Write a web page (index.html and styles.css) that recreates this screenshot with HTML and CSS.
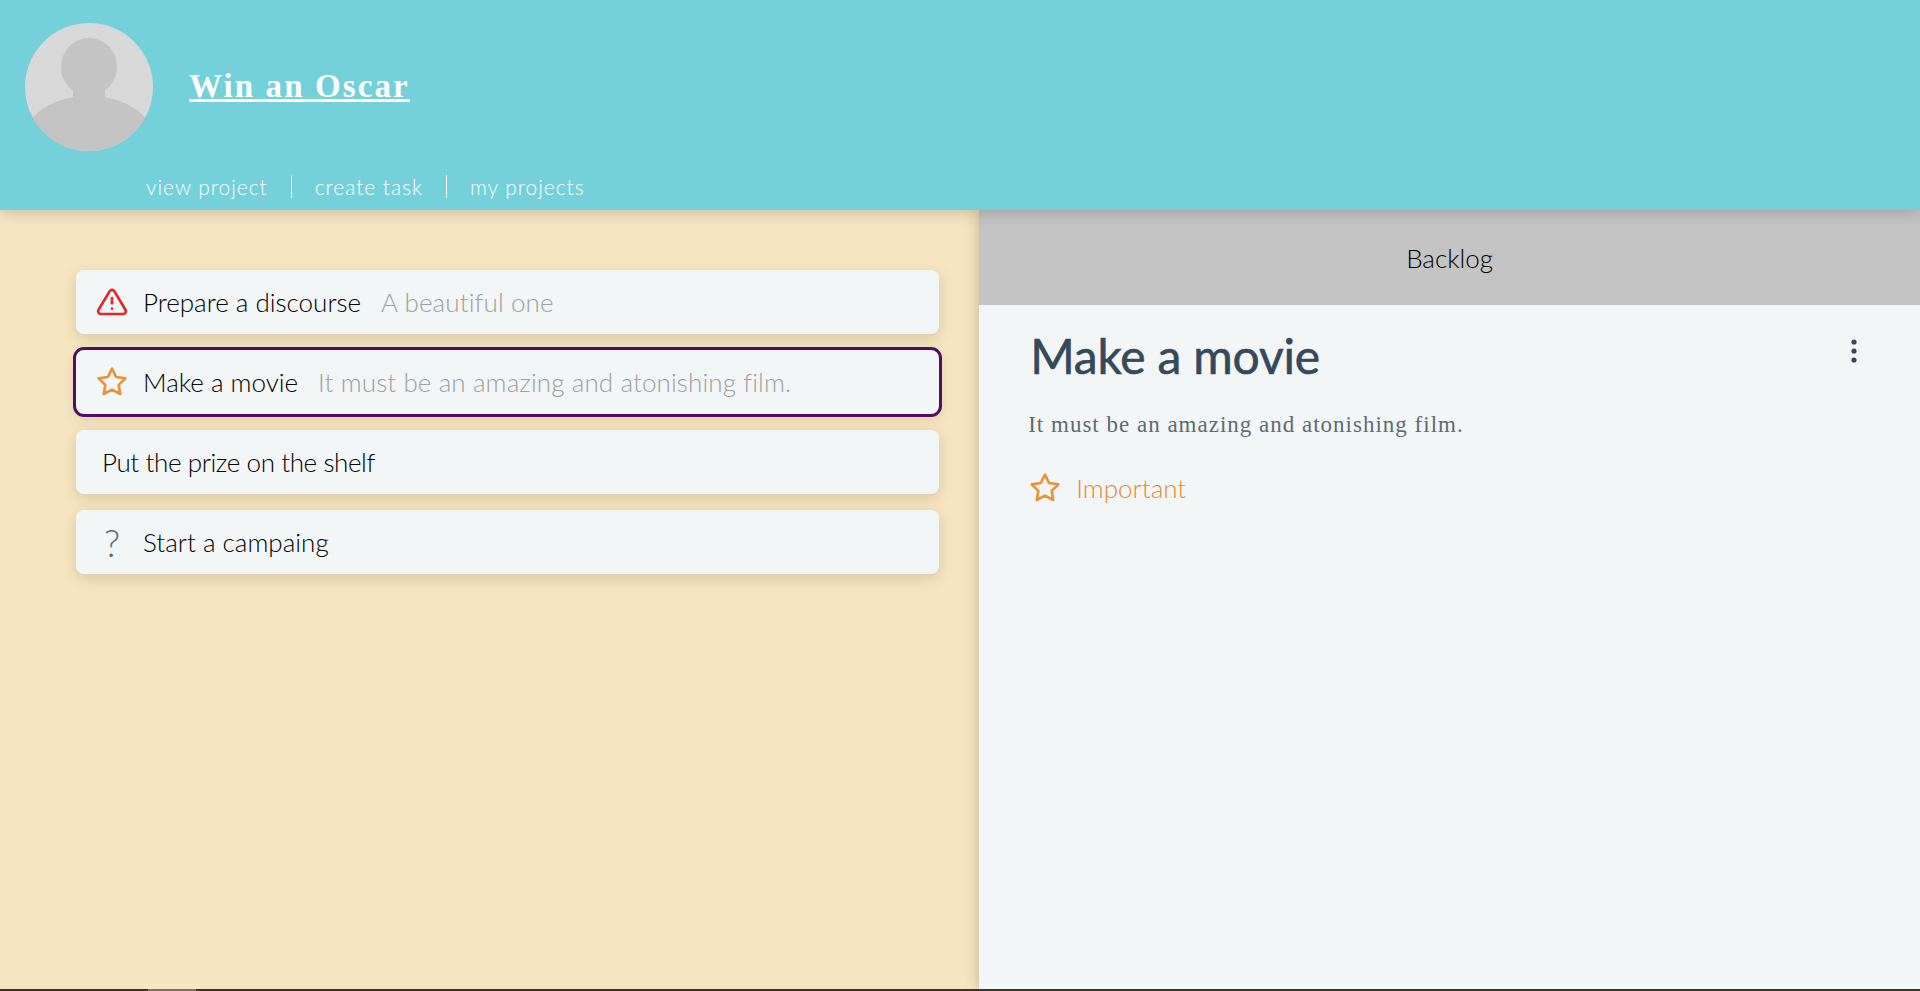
FILE: index.html
```html
<!DOCTYPE html>
<html lang="en">

<head>
    <meta charset="UTF-8">
    <meta name="viewport" content="width=device-width, initial-scale=1.0">
    <title>Win an Oscar</title>
    <link rel="stylesheet" href="styles.css">
</head>

<body>
    <!-- project header -->
    <header class="header">
        <div class="project">
            <svg class="avatar" viewBox="0 0 128 128">
                <defs>
                    <clipPath id="avatar-clip">
                        <circle cx="64" cy="64" r="64"></circle>
                    </clipPath>
                </defs>
                <circle cx="64" cy="64" r="64" fill="#d9d9d9"></circle>
                <g clip-path="url(#avatar-clip)" fill="#c4c4c4">
                    <ellipse cx="64" cy="44" rx="28" ry="29"></ellipse>
                    <rect x="48" y="56" width="32" height="24"></rect>
                    <path d="M48 74C28 78 14 86 5 98V128H123V98C114 86 100 78 80 74Z"></path>
                </g>
            </svg>
            <a class="project-title" href="#">Win an Oscar</a>
        </div>
        <nav class="nav">
            <a href="#">view project</a>
            <span class="nav-sep"></span>
            <a href="#">create task</a>
            <span class="nav-sep"></span>
            <a href="#">my projects</a>
        </nav>
    </header>

    <div class="main">
        <!-- task list -->
        <section class="tasks">
            <div class="task">
                <svg class="task-icon" viewBox="0 0 24 24" fill="none" stroke="#e5262b" stroke-width="2" stroke-linecap="round" stroke-linejoin="round">
                    <path d="M10.29 3.86L1.82 18a2 2 0 0 0 1.71 3h16.94a2 2 0 0 0 1.71-3L13.71 3.86a2 2 0 0 0-3.42 0z"></path>
                    <line x1="12" y1="9" x2="12" y2="13"></line>
                    <line x1="12" y1="17" x2="12.01" y2="17"></line>
                </svg>
                <span class="task-name">Prepare a discourse</span>
                <span class="task-desc">A beautiful one</span>
            </div>
            <div class="task selected">
                <svg class="task-icon" viewBox="0 0 24 24" fill="none" stroke="#e8933a" stroke-width="2" stroke-linejoin="round">
                    <polygon points="12 2 15.09 8.26 22 9.27 17 14.14 18.18 21.02 12 17.77 5.82 21.02 7 14.14 2 9.27 8.91 8.26"></polygon>
                </svg>
                <span class="task-name">Make a movie</span>
                <span class="task-desc">It must be an amazing and atonishing film.</span>
            </div>
            <div class="task plain">
                <span class="task-name">Put the prize on the shelf</span>
            </div>
            <div class="task">
                <span class="task-question">?</span>
                <span class="task-name">Start a campaing</span>
            </div>
        </section>

        <!-- task detail -->
        <section class="detail">
            <div class="status">Backlog</div>
            <div class="detail-body">
                <div class="detail-top">
                    <h1>Make a movie</h1>
                    <svg class="more" viewBox="0 0 6 24" fill="#3a4650">
                        <circle cx="3" cy="3" r="2.6"></circle>
                        <circle cx="3" cy="12" r="2.6"></circle>
                        <circle cx="3" cy="21" r="2.6"></circle>
                    </svg>
                </div>
                <p class="detail-desc">It must be an amazing and atonishing film.</p>
                <div class="priority">
                    <svg class="task-icon" viewBox="0 0 24 24" fill="none" stroke="#e8933a" stroke-width="2" stroke-linejoin="round">
                        <polygon points="12 2 15.09 8.26 22 9.27 17 14.14 18.18 21.02 12 17.77 5.82 21.02 7 14.14 2 9.27 8.91 8.26"></polygon>
                    </svg>
                    <span>Important</span>
                </div>
            </div>
        </section>
    </div>

    <!-- scrollbar line at the bottom of the window -->
    <div class="bottom-line">
        <div class="bottom-thumb"></div>
    </div>
</body>

</html>
```

FILE: styles.css
```css
/* page */
html,
body {
    height: 100%;
}

body {
    margin: 0;
    display: flex;
    flex-direction: column;
    overflow: hidden;
    font-family: Lato, "Noto Sans", sans-serif;
    font-weight: 300;
    color: #000;
    background-color: #f6e6c2;
}

/* header */
.header {
    position: relative;
    z-index: 2;
    height: 210px;
    flex: none;
    box-sizing: border-box;
    padding: 23px 0 0 25px;
    background-color: #74d1da;
    box-shadow: 0 2px 16px rgba(0, 0, 0, 0.2);
    color: white;
}

.project {
    display: flex;
    align-items: center;
    gap: 36px;
}

.avatar {
    width: 128px;
    height: 128px;
}

.project-title {
    margin-top: -2px;
    font-family: "Liberation Serif", serif;
    font-size: 33px;
    font-weight: 700;
    letter-spacing: 2.1px;
    color: white;
}

.nav {
    display: flex;
    align-items: center;
    gap: 23px;
    margin: 23px 0 0 121px;
    font-size: 21px;
    letter-spacing: 0.95px;
}

.nav a {
    color: white;
    text-decoration: none;
}

.nav-sep {
    width: 1px;
    height: 23px;
    background-color: white;
}

/* two columns */
.main {
    flex: 1;
    display: flex;
    min-height: 0;
}

.tasks {
    width: 51%;
    box-sizing: border-box;
    padding: 60px 40px 0 76px;
    display: flex;
    flex-direction: column;
    gap: 16px;
}

.task {
    height: 64px;
    display: flex;
    align-items: center;
    padding-left: 20px;
    background-color: #f3f6f7;
    border-radius: 8px;
    box-shadow: 0 4px 14px rgba(120, 90, 30, 0.22);
    font-size: 26px;
}

.task.selected {
    outline: 3px solid #4f0f66;
}

.task.plain {
    padding-left: 26px;
    letter-spacing: -0.4px;
}

.task-icon {
    width: 32px;
    height: 32px;
    flex: none;
    margin-right: 15px;
}

.task-question {
    width: 32px;
    margin-right: 15px;
    text-align: center;
    font-size: 38px;
    color: #666;
}

.task-name {
    color: #000;
}

.task-desc {
    margin-left: 20px;
    letter-spacing: 0.1px;
    color: #9f9f9f;
}

/* detail column */
.detail {
    flex: 1;
    position: relative;
    z-index: 1;
    background-color: #f3f6f7;
    box-shadow: 0 0 14px rgba(80, 60, 20, 0.3);
}

.status {
    height: 95px;
    display: flex;
    align-items: center;
    justify-content: center;
    background-color: #c4c4c4;
    font-size: 26px;
    color: #000;
}

.detail-body {
    padding: 22px 52px 0 51px;
}

.detail-top {
    display: flex;
    justify-content: space-between;
    align-items: flex-start;
}

h1 {
    margin: 0;
    font-size: 48px;
    font-weight: 400;
    letter-spacing: -0.2px;
    -webkit-text-stroke: 0.6px #35495a;
    color: #35495a;
}

.more {
    width: 6px;
    height: 24px;
    margin: 12px 11px 0 0;
}

.detail-desc {
    margin: 28px 0 0 -2px;
    font-family: "Liberation Serif", serif;
    font-size: 23px;
    font-weight: 400;
    letter-spacing: 1px;
    color: #5f6a72;
}

.priority {
    display: flex;
    align-items: center;
    margin: 34px 0 0 -1px;
    font-size: 26px;
    color: #e58a2e;
}

/* scrollbar line */
.bottom-line {
    position: fixed;
    left: 0;
    right: 0;
    bottom: 0;
    z-index: 3;
    height: 2px;
    background-color: #3a352b;
}

.bottom-thumb {
    width: 48px;
    height: 2px;
    margin-left: 148px;
    background-color: #77736a;
}
```
